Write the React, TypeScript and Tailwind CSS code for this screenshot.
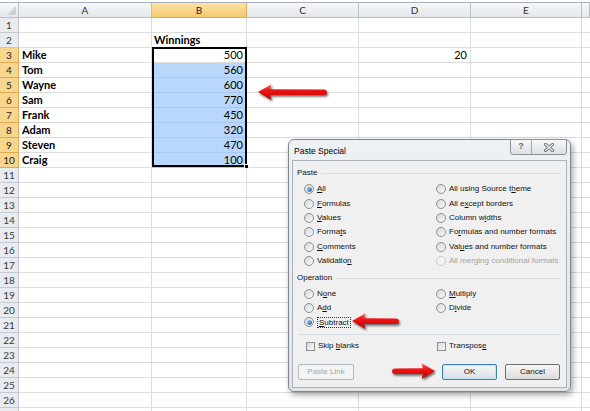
import React from 'react';

const names = ['Mike', 'Tom', 'Wayne', 'Sam', 'Frank', 'Adam', 'Steven', 'Craig'];
const wins = [500, 560, 600, 770, 450, 320, 470, 100];
const cols = ['A', 'B', 'C', 'D', 'E', ''];

function Sheet() {
  const rows = Array.from({ length: 27 }, (_, i) => i + 1);
  return (
    <div className="pt-[2px]">
      <div className="grid grid-cols-[19px_133px_95px_112px_112px_111px_1fr] border-t border-[#a7afb8]">
        {/* corner */}
        <div className="relative h-[15px] border-r border-b border-[#b9c0c8] bg-gradient-to-b from-[#f6f7f9] to-[#e3e7eb]">
          <span className="absolute right-[2px] bottom-[2px] h-0 w-0 border-b-[9px] border-l-[9px] border-b-[#cdd2d8] border-l-transparent" />
        </div>
        {cols.map((c) =>
          c === 'B' ? (
            <div
              key={c}
              className="flex h-[15px] items-center justify-center border-r border-b border-[#e2a955] bg-gradient-to-b from-[#fbe2a6] to-[#f5c96e] text-[10px] text-[#222]"
            >
              {c}
            </div>
          ) : (
            <div
              key={c || 'F'}
              className="flex h-[15px] items-center justify-center border-r border-b border-[#b9c0c8] bg-gradient-to-b from-[#f6f7f9] to-[#e3e7eb] text-[10px] text-[#333]"
            >
              {c}
            </div>
          )
        )}

        {rows.map((r) => {
          const sel = r >= 3 && r <= 10;
          const i = r - 3;
          return (
            <React.Fragment key={r}>
              {sel ? (
                <div className="flex h-[15px] items-center justify-center border-r border-b border-[#e2a955] bg-[#f8d68e] text-[10px] text-[#222]">
                  {r}
                </div>
              ) : (
                <div className="flex h-[15px] items-center justify-center border-r border-b border-[#c3c9d0] bg-[#e8ebef] text-[10px] text-[#3a3a3a]">
                  {r < 27 ? r : ''}
                </div>
              )}
              <div className="flex h-[15px] items-center overflow-hidden whitespace-nowrap border-r border-b border-[#dadcdd] px-[3px] text-[11px] font-bold text-black">
                {sel ? names[i] : ''}
              </div>
              {r === 2 ? (
                <div className="flex h-[15px] items-center whitespace-nowrap border-r border-b border-[#dadcdd] px-[2px] text-[11px] font-bold text-black">
                  Winnings
                </div>
              ) : sel ? (
                <div
                  className={
                    r === 3
                      ? 'flex h-[15px] items-center justify-end border-r border-b border-[#dadcdd] bg-white pr-[3px] text-[11px] text-black'
                      : 'flex h-[15px] items-center justify-end border-r border-b border-[#a9c8ee] bg-[#b9d7fb] pr-[3px] text-[11px] text-black'
                  }
                >
                  {wins[i]}
                </div>
              ) : (
                <div className="h-[15px] border-r border-b border-[#dadcdd]" />
              )}
              <div className="h-[15px] border-r border-b border-[#dadcdd]" />
              <div className="flex h-[15px] items-center justify-end border-r border-b border-[#dadcdd] pr-[3px] text-[11px] text-black">
                {r === 3 ? '20' : ''}
              </div>
              <div className="h-[15px] border-r border-b border-[#dadcdd]" />
              <div className="h-[15px] border-b border-[#dadcdd]" />
            </React.Fragment>
          );
        })}
      </div>
    </div>
  );
}

function Radio({ checked, disabled }: { checked?: boolean; disabled?: boolean }) {
  if (disabled) {
    return <span className="h-[10px] w-[10px] shrink-0 rounded-full border border-[#c9cbcd] bg-[#f3f3f3]" />;
  }
  return (
    <span className="flex h-[10px] w-[10px] shrink-0 items-center justify-center rounded-full border border-[#8c9094] bg-gradient-to-br from-[#d3d5d8] to-[#fbfbfb]">
      {checked && <span className="h-[5px] w-[5px] rounded-full bg-gradient-to-br from-[#9ad2f6] to-[#1b5ea6]" />}
    </span>
  );
}

function Check() {
  return <span className="h-[9px] w-[9px] shrink-0 border border-[#8c9094] bg-gradient-to-br from-[#d6d8db] to-[#fbfbfb]" />;
}

function Opt({
  checked,
  disabled,
  children,
  focus
}: {
  checked?: boolean;
  disabled?: boolean;
  focus?: boolean;
  children: React.ReactNode;
}) {
  return (
    <div className="flex items-center gap-[3px]">
      <Radio checked={checked} disabled={disabled} />
      <span
        className={
          focus
            ? 'whitespace-nowrap border border-dotted border-[#333] px-[1px] leading-[9px]'
            : disabled
              ? 'whitespace-nowrap text-[#a3a3a3]'
              : 'whitespace-nowrap'
        }
      >
        {children}
      </span>
    </div>
  );
}

function GroupLabel({ text, className }: { text: string; className: string }) {
  return (
    <div className={className}>
      <span>{text}</span>
      <span className="mr-[1px] h-px flex-1 bg-[#d6dde4]" />
    </div>
  );
}

function PasteSpecial() {
  return (
    <div className="absolute left-[288px] top-[139px] flex h-[253px] w-[283px] flex-col rounded-[6px] border border-[#7f858c] bg-gradient-to-b from-[#eef1f4] to-[#e1e5ea] px-[3px] pb-[3px] font-['Liberation_Sans',Arial,sans-serif] text-[8px] text-[#111] shadow-[2px_3px_6px_rgba(0,0,0,0.35)]">
      <div className="flex h-[20px] items-center pt-[3px] pl-[2px] text-[8.5px] text-black">Paste Special</div>
      <div className="absolute right-[3px] top-[-1px] flex h-[16px] w-[57px] rounded-b-[3px] border border-[#8a9097] bg-gradient-to-b from-[#f6f7f8] to-[#dde1e5]">
        <div className="flex w-[21px] items-center justify-center border-r border-[#a4aab0] text-[9px] font-bold text-[#676d73]">?</div>
        <div className="flex flex-1 items-center justify-center">
          <svg width="10" height="9" viewBox="0 0 10 9">
            <path d="M1.5 1.5 L8.5 7.5 M8.5 1.5 L1.5 7.5" stroke="#6c7278" strokeWidth="3" strokeLinecap="square" />
            <path d="M1.5 1.5 L8.5 7.5 M8.5 1.5 L1.5 7.5" stroke="#fafafa" strokeWidth="1.2" strokeLinecap="square" />
          </svg>
        </div>
      </div>

      <div className="flex h-[228px] flex-col border border-[#adb2b8] bg-[#f0f0f0] px-[4px]">
        <GroupLabel text="Paste" className="mt-[5px] flex h-[14px] items-center gap-[4px]" />
        <div className="mt-[2px] ml-[7px] grid grid-cols-[132px_1fr] grid-flow-col grid-rows-[repeat(6,14.4px)] items-center">
          <Opt checked>
            <u>A</u>ll
          </Opt>
          <Opt>
            <u>F</u>ormulas
          </Opt>
          <Opt>
            <u>V</u>alues
          </Opt>
          <Opt>
            Forma<u>t</u>s
          </Opt>
          <Opt>
            <u>C</u>omments
          </Opt>
          <Opt>
            Validatio<u>n</u>
          </Opt>
          <Opt>
            All using Source t<u>h</u>eme
          </Opt>
          <Opt>
            All e<u>x</u>cept borders
          </Opt>
          <Opt>
            Column w<u>i</u>dths
          </Opt>
          <Opt>
            Fo<u>r</u>mulas and number formats
          </Opt>
          <Opt>
            Val<u>u</u>es and number formats
          </Opt>
          <Opt disabled>All merging conditional formats</Opt>
        </div>

        <GroupLabel text="Operation" className="mt-[3px] flex h-[14px] items-center gap-[4px]" />
        <div className="mt-[2px] ml-[7px] grid grid-cols-[132px_1fr] grid-flow-col grid-rows-[repeat(3,14px)] items-center">
          <Opt>
            N<u>o</u>ne
          </Opt>
          <Opt>
            A<u>d</u>d
          </Opt>
          <Opt checked focus>
            <u>S</u>ubtract
          </Opt>
          <Opt>
            <u>M</u>ultiply
          </Opt>
          <Opt>
            D<u>i</u>vide
          </Opt>
          <div />
        </div>

        <div className="mx-[1px] mt-[5px] h-px bg-[#d6dde4]" />

        <div className="mt-[4px] ml-[7px] grid h-[14px] grid-cols-[132px_1fr] items-center">
          <div className="ml-[2px] flex items-center gap-[3px]">
            <Check />
            <span>
              Skip <u>b</u>lanks
            </span>
          </div>
          <div className="ml-[1px] flex items-center gap-[3px]">
            <Check />
            <span>
              Transpos<u>e</u>
            </span>
          </div>
        </div>

        <div className="mt-[11px] flex h-[16px] items-stretch">
          <div className="ml-[1px] flex w-[56px] items-center justify-center rounded-[2px] border border-[#b4b9bd] bg-[#f4f4f4] text-[#a6a6a6]">
            <span>Paste Link</span>
          </div>
          <div className="flex-1" />
          <div className="flex w-[55px] items-center justify-center rounded-[2px] border border-[#3c7fb1] bg-gradient-to-b from-[#f3f6f8] to-[#d9e0e6] shadow-[inset_0_0_0_1px_#c4e5f6]">
            OK
          </div>
          <div className="ml-[8px] mr-[2px] flex w-[55px] items-center justify-center rounded-[2px] border border-[#707070] bg-gradient-to-b from-[#f6f6f6] to-[#dcdcdc]">
            Cancel
          </div>
        </div>
      </div>
    </div>
  );
}

function Arrow({ left, top, len, flip, id }: { left: number; top: number; len: number; flip?: boolean; id: string }) {
  const W = len + 4;
  const d = `M1 9 L14.5 1.3 L13 6.2 L${len - 3} 6.6 Q${len} 6.9 ${len} 9.3 Q${len} 11.8 ${len - 3} 12 L13 11.9 L14.5 17 Z`;
  const fl = flip ? `translate(${W},0) scale(-1,1)` : undefined;
  return (
    <svg className="absolute" style={{ left, top }} width={W} height={21} viewBox={`0 0 ${W} 21`}>
      <defs>
        <linearGradient id={`g${id}`} x1="0" y1="0" x2="0" y2="1">
          <stop offset="0" stopColor="#ff6a6a" />
          <stop offset="0.35" stopColor="#f01616" />
          <stop offset="1" stopColor="#c40000" />
        </linearGradient>
        <filter id={`b${id}`} x="-10%" y="-30%" width="120%" height="160%">
          <feGaussianBlur stdDeviation="0.8" />
        </filter>
      </defs>
      <g transform="translate(1.2,1.8)" filter={`url(#b${id})`}>
        <g transform={fl}>
          <path d={d} fill="#3a3a3a" opacity="0.75" />
        </g>
      </g>
      <g transform={fl}>
        <path d={d} fill={`url(#g${id})`} />
      </g>
    </svg>
  );
}

export default function App() {
  return (
    <div className="relative h-[411px] w-[590px] overflow-hidden bg-white font-['Lato',sans-serif]">
      <Sheet />
      {/* selection outline B3:B10 */}
      <div className="absolute left-[152px] top-[47px] h-[120px] w-[95px] border-2 border-black" />
      <div className="absolute left-[244px] top-[164px] h-[5px] w-[5px] border border-white bg-black" />
      <PasteSpecial />
      <Arrow id="a1" left={257} top={83} len={70} />
      <Arrow id="a2" left={351} top={312} len={48} />
      <Arrow id="a3" left={388} top={362} len={44} flip />
    </div>
  );
}
